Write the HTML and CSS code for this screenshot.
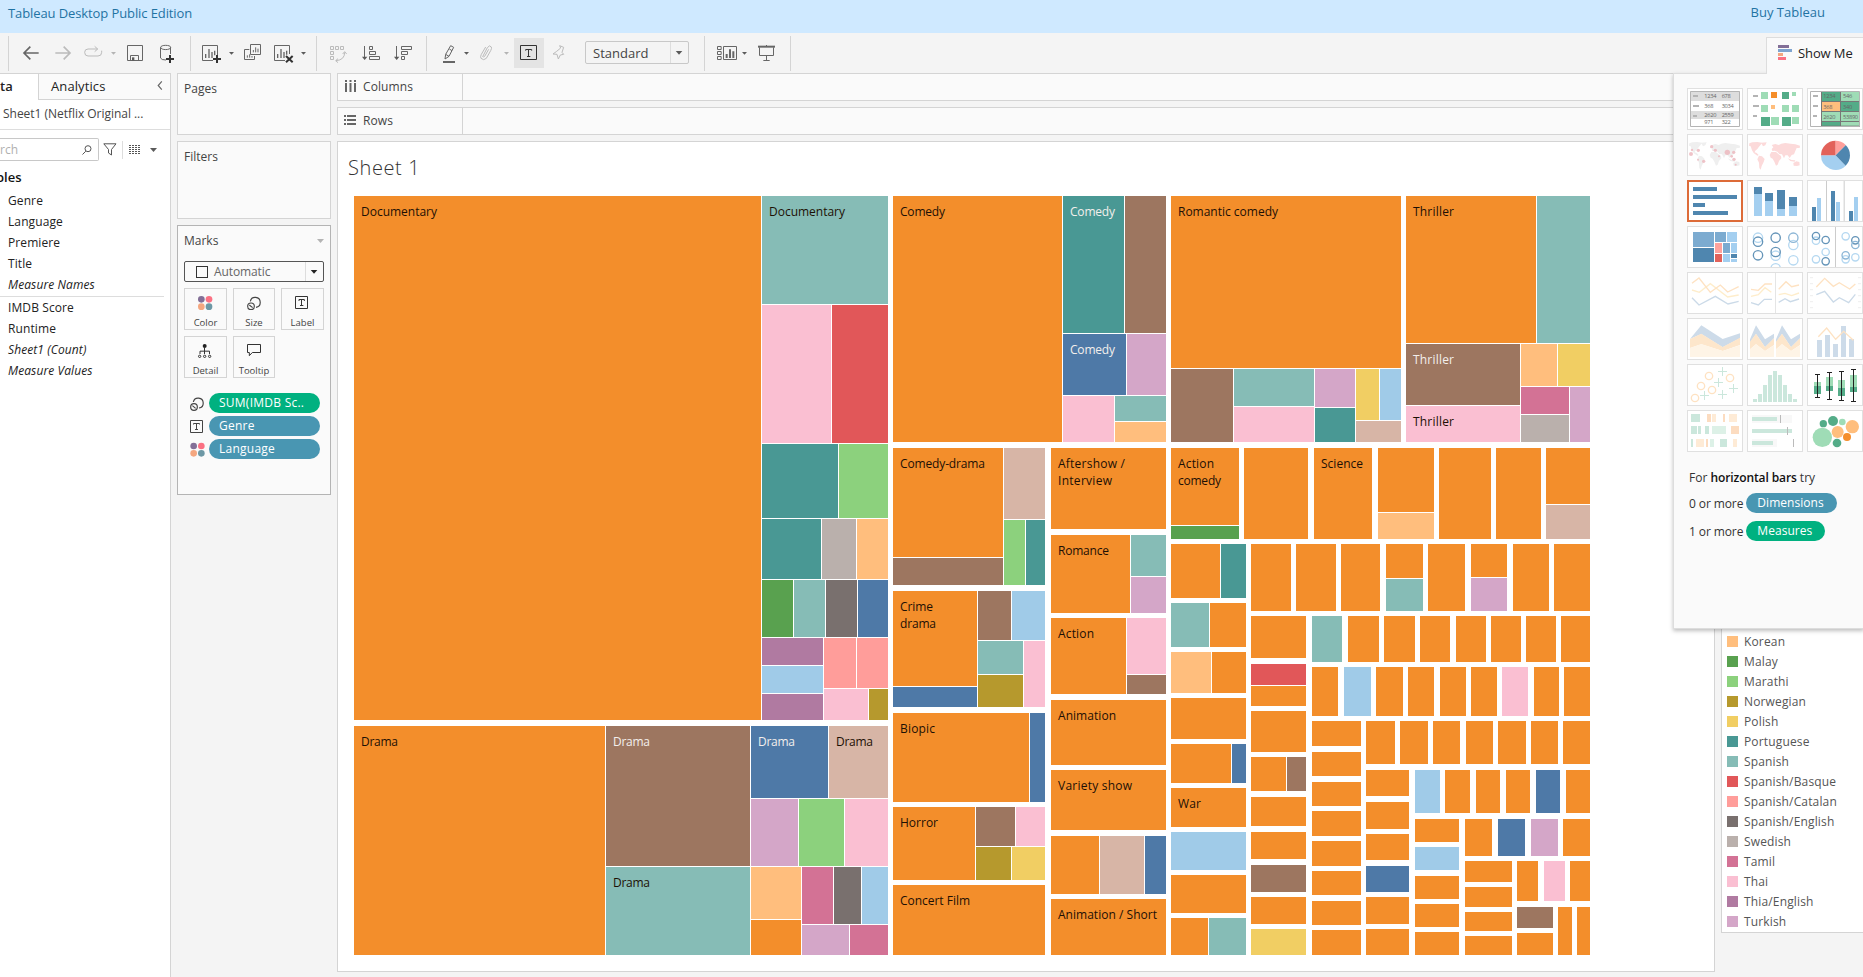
FILE: index.html
```html
<!DOCTYPE html>
<html lang="en">
<head>
<meta charset="utf-8">
<title>Tableau Desktop Public Edition</title>
<link rel="stylesheet" href="styles.css">
</head>
<body>
<header class="banner"><span class="banner-title">Tableau Desktop Public Edition</span><span class="banner-buy">Buy Tableau</span></header>

<div class="toolbar">
  <div class="tool-group tool-first"></div>
  <div class="tool-group">
    <svg width="38" height="40" viewBox="27 99 114 120"><path class="ln5" d="M116 159H72M91 140L72 159L91 178"/></svg>
    <svg width="30" height="40" viewBox="141 99 90 120"><path class="ln5 off" d="M166 159H210M191 140L210 159L191 178"/></svg>
    <svg width="43" height="40" viewBox="231 99 129 120"><path class="ln3 off" d="M293 147H264Q254 147 254 157Q254 168 264 168H294Q305 168 305 157V152M284 139L293 147L284 155"/><path class="offfill" d="M333 156H348L340.500 164Z"/></svg>
    <svg width="30" height="40" viewBox="360 99 90 120"><path class="ln3" d="M382.500 136.500H427.500V181.500H382.500ZM391.500 181V166.500H415.500V181"/><path class="fl" d="M396 172H403V182H396Z"/></svg>
    <svg width="40" height="40" viewBox="450 99 120 120"><path class="ln3" d="M481.500 142V174Q484 180 498 180M511.500 142V162M482 142C482 134 512 134 512 142C512 151 482 151 482 142Z"/><path class="dk5" d="M498 177H522M510 165V189"/></svg>
  </div>
  <div class="tool-group">
    <svg width="47" height="40" viewBox="573 99 141 120"><path class="ln3" d="M639 181.500H607.500V136.500H652.500V166"/><path class="ln4" d="M617 174V162M627 174V147M636 174V156M644 166V152"/><path class="dk5" d="M639 177H663M651 165V189"/><path class="fl" d="M687 156H702L694.500 164Z"/></svg>
    <svg width="30" height="40" viewBox="714 99 90 120"><path class="ln3" d="M751.500 133.500H781.500V163.500H751.500ZM748 148.500H733.500V178.500H763.500V168M742 173V166M749 173V163M756 173V168M760 157V150M767 157V142M774 157V146"/></svg>
    <svg width="48" height="40" viewBox="804 99 144 120"><path class="ln3" d="M855 181.500H823.500V136.500H868.500V162"/><path class="ln4" d="M833 174V162M843 174V147M852 174V156M860 164V152"/><path class="dk5" d="M858 168L878 187M878 168L858 187"/><path class="fl" d="M903 156H918L910.500 164Z"/></svg>
  </div>
  <div class="tool-group">
    <svg width="38" height="40" viewBox="951 99 114 120"><path class="ln3 off" d="M991.500 139.500H1000.500V148.500H991.500ZM1006.500 139.500H1015.500V148.500H1006.500ZM1021.500 139.500H1030.500V148.500H1021.500ZM991.500 154.500H1000.500V163.500H991.500ZM991.500 169.500H1000.500V178.500H991.500ZM1034 157Q1034 180 1008 182M1028 162L1034 155L1040 162M1014 176L1007 182L1014 188"/></svg>
    <svg width="32" height="40" viewBox="1065 99 96 120"><path class="ln3" d="M1093.500 138V172M1108.500 139.500H1117.500V148.500H1108.500ZM1108.500 154.500H1126.500V163.500H1108.500ZM1108.500 169.500H1138.500V178.500H1108.500Z"/><path class="fl" d="M1086 170H1102L1094 180Z"/></svg>
    <svg width="39" height="40" viewBox="1161 99 117 120"><path class="ln3" d="M1189.500 138V172M1204.500 139.500H1234.500V148.500H1204.500ZM1204.500 154.500H1222.500V163.500H1204.500ZM1204.500 169.500H1213.500V178.500H1204.500Z"/><path class="fl" d="M1182 170H1198L1190 180Z"/></svg>
  </div>
  <div class="tool-group">
    <svg width="46" height="40" viewBox="1281 99 138 120"><path class="ln3" d="M1352 137L1361 142L1347 169L1335 177L1337 163ZM1337 163L1347 169M1348 147L1356 152"/><path class="ln6" d="M1329 186H1365"/><path class="fl" d="M1392 156H1407L1399.500 164Z"/></svg>
    <svg width="38" height="40" viewBox="1419 99 114 120"><path class="ln3 off" d="M1449 168L1462 143Q1469 133 1474 141Q1476 145 1472 152L1459 175Q1451 183 1443 175Q1440 170 1444 163L1457 141M1466 148L1454 169Q1450 174 1447 168"/><path class="offfill" d="M1512 156H1527L1519.500 164Z"/></svg>
    <svg class="tool-active" width="30" height="30" viewBox="1542 114 90 90"><path class="dk3" d="M1561.500 136.500H1609.500V178.500H1561.500ZM1577 152V148.500H1595V152M1585.500 148V170M1581 169.500H1591"/></svg>
    <svg width="40" height="40" viewBox="1632 99 120 120"><path class="ln3 off" d="M1679 137L1691 142L1686 157L1691 163L1681 165L1675 177L1671 163L1659 162L1670 154L1682 144Z"/></svg>
    <div class="fit-select"><span class="fit-label">Standard</span><svg class="fit-caret" width="18" height="21" viewBox="0 0 18 21"><path class="fl" d="M5 9H12L8.500 13Z"/></svg></div>
  </div>
  <div class="tool-group">
    <svg width="44" height="40" viewBox="2115 99 132 120"><path class="ln3" d="M2152.500 139.500H2163.500V148.500H2152.500ZM2152.500 154.500H2163.500V163.500H2152.500ZM2152.500 169.500H2163.500V178.500H2152.500ZM2170.500 139.500H2209.500V178.500H2170.500Z"/><path class="ln6" d="M2180 174V162M2190 174V148M2200 174V154"/><path class="fl" d="M2226 156H2241L2233.500 164Z"/></svg>
    <svg width="41" height="40" viewBox="2247 99 123 120"><path class="ln3" d="M2278.500 142V166.500H2320.500V142M2299.500 135V139M2299.500 166V180M2290 181.500H2309"/><path class="ln6" d="M2274 140H2325"/></svg>
  </div>
</div>

<main class="work">
  <aside class="data-pane">
    <div class="tabs"><span class="tab-data">ta</span><span class="tab-analytics">Analytics</span><svg width="6" height="10" viewBox="0 0 6 10"><path class="chev" d="M5 .5L1 5L5 9.500"/></svg></div>
    <div class="source">Sheet1 (Netflix Original ...</div>
    <div class="search-row">
      <div class="search"><span>rch</span><svg width="10" height="10" viewBox="0 0 10 10"><path class="hair" d="M3.800 6.200L.5 9.500M9 3.700A3 3 0 1 1 3 3.700A3 3 0 1 1 9 3.700"/></svg></div>
      <svg class="funnel" width="14" height="13" viewBox="0 0 14 13"><path class="hair" d="M.8 .8H13L8.500 6.500V12L5.500 10V6.500Z"/></svg>
      <i class="rule"></i>
      <svg class="list-icon" width="12" height="10" viewBox="0 0 12 10"><path class="dots" d="M0 .5H12M0 2.500H12M0 4.500H12M0 6.500H12M0 8.500H12"/></svg>
      <svg class="list-caret" width="7" height="4" viewBox="0 0 7 4"><path class="fl" d="M0 0H7L3.500 4Z"/></svg>
    </div>
    <h2 class="tables">bles</h2>
    <ul class="fields">
      <li>Genre</li><li>Language</li><li>Premiere</li><li>Title</li><li><i>Measure Names</i></li>
    </ul>
    <ul class="fields measures">
      <li>IMDB Score</li><li>Runtime</li><li><i>Sheet1 (Count)</i></li><li><i>Measure Values</i></li>
    </ul>
  </aside>

  <aside class="cards">
    <section class="card pages">Pages</section>
    <section class="card filters">Filters</section>
    <section class="card marks">
      <div class="marks-head"><span>Marks</span><svg width="7" height="4" viewBox="0 0 7 4"><path class="offfill" d="M0 0H7L3.500 4Z"/></svg></div>
      <div class="mark-type"><i class="box"></i><span>Automatic</span><svg width="18" height="19" viewBox="0 0 18 19"><path class="dkfill" d="M5 8H12L8.500 12Z"/></svg></div>
      <div class="mark-grid">
        <div class="mark-btn"><svg width="43" height="22" viewBox="552 204 129 66"><use href="#g-color"/></svg>Color</div>
        <div class="mark-btn"><svg width="42" height="22" viewBox="699 204 126 66"><use href="#g-size"/></svg>Size</div>
        <div class="mark-btn"><svg width="43" height="22" viewBox="843 204 129 66"><path class="dk3" d="M886.500 229.500H922.500V265.500H886.500ZM897 243V238.500H913V243M904.500 239V257M900 256.500H910"/></svg>Label</div>
        <div class="mark-btn"><svg width="43" height="22" viewBox="552 348 129 66"><circle class="dkfill" cx="614" cy="378" r="6"/><path class="dk3" d="M613.500 380V402M600 402V393.500H628.500V402"/><g class="dk3"><circle cx="599" cy="409" r="3.500"/><circle cx="614" cy="409" r="3.500"/><circle cx="629" cy="409" r="3.500"/></g></svg>Detail</div>
        <div class="mark-btn"><svg width="42" height="22" viewBox="699 348 126 66"><path class="dk3" d="M742.500 373.500H781.500V397.500H757L748 407V397.500H742.500Z"/></svg>Tooltip</div>
      </div>
      <div class="pills">
        <div class="pill-row"><svg width="15" height="15" viewBox="741 226 45 45"><g id="g-size" class="sizeg"><path d="M751 244A15 15 0 1 1 768 262"/><circle cx="753" cy="259" r="10"/><path d="M748 255L758 263"/></g></svg><span class="pill green">SUM(IMDB Sc..</span></div>
        <div class="pill-row"><svg width="15" height="15" viewBox="0 0 15 15"><path class="hairdk" d="M.5 1.500H12.500V13.500H.5ZM3.500 5.500V4.500H9.500V5.500M6.500 4.500V10.500M5 10.500H8"/></svg><span class="pill blue">Genre</span></div>
        <div class="pill-row"><svg width="15" height="15" viewBox="593 226 45 45"><g id="g-color"><circle cx="604" cy="238" r="10" fill="#836f97"/><circle cx="627" cy="238" r="10" fill="#fb7183"/><circle cx="604" cy="260" r="10" fill="#f4a780"/><circle cx="627" cy="260" r="10" fill="#6d98a5"/></g></svg><span class="pill blue">Language</span></div>
      </div>
    </section>
  </aside>

  <section class="canvas">
    <div class="shelf"><div class="shelf-name"><svg width="11" height="12" viewBox="0 0 11 12"><path class="shelf-ico" d="M1 0V2M5.500 0V2M10 0V2M1 3V12M5.500 3V12M10 3V12"/></svg>Columns</div></div>
    <div class="shelf"><div class="shelf-name rows"><svg width="12" height="10" viewBox="0 0 12 10"><path class="shelf-ico" d="M0 1H2M0 5H2M0 9H2M3 1H12M3 5H12M3 9H12"/></svg>Rows</div></div>
    <div class="lower">
      <section class="sheet">
        <h1>Sheet 1</h1>
        <svg id="treemap" class="treemap" width="1236" height="759" viewBox="354 196 1236 759"></svg>
      </section>
      <aside class="legend">
        <ul>
          <li><i class="c-o"></i>Korean</li><li><i class="c-G"></i>Malay</li><li><i class="c-g"></i>Marathi</li><li><i class="c-N"></i>Norwegian</li><li><i class="c-P"></i>Polish</li><li><i class="c-T"></i>Portuguese</li><li><i class="c-t"></i>Spanish</li><li><i class="c-R"></i>Spanish/Basque</li><li><i class="c-r"></i>Spanish/Catalan</li><li><i class="c-K"></i>Spanish/English</li><li><i class="c-k"></i>Swedish</li><li><i class="c-M"></i>Tamil</li><li><i class="c-m"></i>Thai</li><li><i class="c-V"></i>Thia/English</li><li><i class="c-v"></i>Turkish</li>
        </ul>
      </aside>
    </div>
  </section>
</main>

<div class="showme-tab"><svg width="14" height="15" viewBox="0 0 14 15"><path fill="#836f97" d="M0 0H11V3H0Z"/><path fill="#7fa4cf" d="M0 4H14V7H0Z"/><path fill="#f4a780" d="M0 8H5V11H0Z"/><path fill="#fb7183" d="M0 12H8V15H0Z"/></svg>Show Me</div>
<aside class="showme">
  <div class="thumbs">
    <svg viewBox="81 264 168 126"><path fill="#ddd" d="M91 273H240V303H91ZM91 333H240V357H91Z"/><path fill="none" stroke="#b4b4b4" stroke-width="3" d="M91.500 274.500H238.500V379.500H91.500Z"/><path class="dash" d="M99 288H114M99 318H117M99 348H111"/><g class="tiny"><text x="133" y="295">1234</text><text x="185" y="295">678</text><text x="133" y="323">368</text><text x="185" y="323">3034</text><text x="133" y="350">2620</text><text x="185" y="350">2559</text><text x="133" y="373">971</text><text x="185" y="373">322</text></g></svg>
    <svg viewBox="261 264 168 126"><path class="dash" d="M279 288H294M279 318H297M279 348H291"/><path fill="#9fdcb6" d="M303 276H324V297H303ZM396 276H408V288H396ZM303 315H324V336H303ZM366 315H387V336H366ZM396 315H417V336H396ZM333 351H357V375H333ZM396 351H417V372H396Z"/><path fill="#54ac88" d="M366 276H387V297H366ZM303 351H330V378H303ZM366 351H393V378H366Z"/><path fill="#f58e2b" d="M333 276H351V294H333Z"/><path fill="#ffbe7d" d="M333 315H345V327H333Z"/></svg>
    <svg viewBox="441 264 168 126"><path fill="#54ac88" d="M485 276H541V305H485ZM543 306H600V334H543ZM485 366H541V380H485Z"/><path fill="#9fdcb6" d="M543 276H600V304H543ZM485 336H541V364H485ZM543 336H600V364H543ZM543 366H600V380H543Z"/><path fill="#ffbe7d" d="M485 306H541V334H485Z"/><path stroke="#777" stroke-width="3" fill="none" d="M484.500 275V379M541.500 275V379M484 304.500H600M484 334.500H600M484 364.500H600M484 378.500H600"/><path fill="none" stroke="#b4b4b4" stroke-width="3" d="M451.500 274.500H598.500V379.500H451.500Z"/><path class="dash" d="M459 288H474M459 318H474M459 348H471"/><g class="tiny"><text x="490" y="295">1234</text><text x="549" y="295">546</text><text x="490" y="326">368</text><text x="549" y="326">340</text><text x="490" y="356">2620</text><text x="549" y="356">53890</text></g></svg>

    <svg class="gray-map" viewBox="81 402 168 126"><path id="world" d="M88 430L97 427L112 426L126 428L122 434L117 440L112 447L106 452L104 457L110 459L116 465L112 467L101 459L96 451L92 439L87 437ZM123 428L140 427L136 436L129 439ZM117 467L126 469L134 477L131 486L125 498L122 509L118 504L117 488L112 478ZM155 435L166 432L176 435L184 431L196 429L212 431L226 433L240 437L239 444L230 444L226 453L222 463L215 465L209 474L203 466L196 466L192 475L186 463L178 462L172 455L164 452L157 453L155 447L160 442ZM154 456L168 456L176 463L183 468L184 475L177 483L173 494L168 497L163 485L158 476L152 473L149 465ZM220 489L229 484L238 486L239 496L231 498L221 497ZM203 475L215 480L226 481L224 485L211 483Z"/><g fill="#ecb8be" fill-opacity=".85"><circle cx="93" cy="462" r="6"/><circle cx="96" cy="450" r="3.500"/><circle cx="115" cy="451" r="5"/><circle cx="114" cy="479" r="3"/><circle cx="131" cy="484" r="5"/><circle cx="155" cy="440" r="5"/><circle cx="166" cy="451" r="5"/><circle cx="177" cy="469" r="3"/><circle cx="202" cy="457" r="8"/><circle cx="215" cy="469" r="4"/><circle cx="221" cy="457" r="5"/><circle cx="222" cy="478" r="5"/><circle cx="227" cy="494" r="3"/></g></svg>
    <svg class="pink-map" viewBox="261 402 168 126"><use href="#world" x="180"/></svg>
    <svg viewBox="441 402 168 126"><path fill="#a4cff0" d="M526.500 466H483A43.500 43.500 0 0 0 557 497Z"/><path fill="#4f86af" d="M526.500 466L557 497A43.500 43.500 0 0 0 557 435Z"/><path fill="#ff9f9b" d="M526.500 466L557 435A43.500 43.500 0 0 0 526.500 422.500Z"/><path fill="#e2625a" d="M526.500 466V422.500A43.500 43.500 0 0 0 483 466Z"/></svg>

    <svg class="selected" viewBox="81 540 168 126"><path fill="#4f86af" d="M99 561H171V573H99ZM99 585H231V597H99ZM99 609H135V621H99ZM99 633H204V645H99Z"/></svg>
    <svg viewBox="261 540 168 126"><path fill="#a4cff0" d="M282 582H306V648H282ZM315 603H339V648H315ZM351 627H375V648H351ZM387 618H411V648H387Z"/><path fill="#4f86af" d="M282 561H306V582H282ZM315 579H339V603H315ZM351 570H375V627H351ZM387 591H411V618H387Z"/></svg>
    <svg viewBox="441 540 168 126"><path stroke="#ccc" stroke-width="3" d="M499.500 543V663M552.500 543V663"/><path fill="#4f86af" d="M456 621H468V663H456ZM513 573H525V663H513ZM567 633H579V663H567Z"/><path fill="#a4cff0" d="M471 594H483V663H471ZM528 606H540V663H528ZM582 591H594V663H582Z"/></svg>

    <svg viewBox="81 678 168 126"><path fill="#4f86af" d="M99 744H162V786H99ZM213 762H231V774H213Z"/><path fill="#7cabd0" d="M99 696H162V741H99ZM165 696H198V726H165ZM189 729H210V759H189Z"/><path fill="#a4cff0" d="M201 696H231V726H201ZM213 729H231V759H213ZM189 762H210V786H189ZM213 777H231V786H213Z"/><path fill="#ffa29c" d="M165 729H186V759H165Z"/><path fill="#e2625a" d="M165 762H186V786H165Z"/></svg>
    <svg viewBox="261 678 168 126"><g class="ring lite"><circle cx="294" cy="713" r="14"/><circle cx="347" cy="767" r="14"/><circle cx="347" cy="805" r="14"/><circle cx="400" cy="735" r="14"/><circle cx="400" cy="781" r="14"/></g><g class="ring deep"><circle cx="294" cy="725" r="14"/><circle cx="294" cy="766" r="14"/><circle cx="347" cy="713" r="14"/><circle cx="347" cy="756" r="14"/></g><g class="ring mid"><circle cx="400" cy="713" r="14"/></g></svg>
    <svg viewBox="441 678 168 126"><path stroke="#ccc" stroke-width="3" d="M526.500 681V801"/><g class="ring lite"><circle cx="468" cy="722" r="11"/><circle cx="497" cy="756" r="11"/><circle cx="468" cy="778" r="11"/><circle cx="557" cy="709" r="11"/><circle cx="557" cy="778" r="11"/><circle cx="586" cy="772" r="11"/></g><g class="ring deep"><circle cx="468" cy="708" r="11"/><circle cx="497" cy="720" r="11"/><circle cx="497" cy="784" r="11"/><circle cx="586" cy="721" r="11"/></g><g class="ring mid"><circle cx="586" cy="735" r="11"/><circle cx="557" cy="766" r="11"/></g></svg>

    <svg viewBox="81 6 168 126"><g class="tl"><path stroke="#feedcb" d="M96 60L118 67L151 41L203 81L236 75"/><path stroke="#fee2c2" d="M96 40L117 24L151 67L181 45L203 66L236 50"/><path stroke="#cbdae8" d="M96 83L117 105L166 79L204 102L236 94"/></g></svg>
    <svg viewBox="261 6 168 126"><path stroke="#e5e5e5" stroke-width="3" d="M346.500 9V129"/><g class="tl"><path stroke="#feedcb" d="M273 79L295 74L315 53L334 67M356 74L375 70L395 77L417 69"/><path stroke="#fee2c2" d="M273 58L295 61L315 42H336M356 58L378 35L395 50L417 45"/><path stroke="#cbdae8" d="M273 98L295 105L313 88H336M356 97L375 86L391 95L417 87"/></g></svg>
    <svg viewBox="441 6 168 126"><path stroke="#e5e5e5" stroke-width="2" d="M450 23H459M450 41H459M450 59H459M450 77H459M450 95H459M450 113H459M594 23H603M594 41H603M594 59H603M594 77H603M594 95H603M594 113H603"/><g class="tl"><path stroke="#fee2c2" d="M469 51L494 25L520 49L538 38L569 57L586 42"/><path stroke="#cbdae8" d="M469 74L494 64L520 96L538 83L566 98L586 73"/></g></svg>

    <svg viewBox="81 144 168 126"><path fill="#cddbe9" d="M90 207L124 166L188 207L240 190V205L188 232L124 192L90 207Z"/><path fill="#fde6cb" d="M90 207L124 191L188 231L240 203V225L188 243L124 223L90 234Z"/><path fill="#fef4e6" d="M90 234L124 222L188 243L240 226V261H90Z"/></svg>
    <svg viewBox="261 144 168 126"><g id="areas"><path fill="#cddbe9" d="M270 208L288 166L315 208L342 191V205L315 232L288 192L270 218Z"/><path fill="#fde6cb" d="M270 215L288 191L315 231L342 205V225L315 243L288 223L270 238Z"/><path fill="#fef4e6" d="M270 238L288 222L315 243L342 226V261H270Z"/></g><use href="#areas" x="78"/></svg>
    <svg viewBox="441 144 168 126"><path fill="#cddbe9" d="M471 210H486V261H471ZM495 195H510V261H495ZM519 222H534V261H519ZM543 168H558V261H543ZM567 207H582V261H567Z"/><path fill="none" stroke="#fee2c2" stroke-width="4" d="M475 200L500 174L527 208L551 184L580 211"/></svg>

    <svg viewBox="81 282 168 126"><g class="ring peach"><circle cx="147" cy="318" r="11"/><circle cx="210" cy="324" r="11"/><circle cx="123" cy="348" r="11"/><circle cx="156" cy="360" r="11"/><circle cx="105" cy="384" r="11"/></g><path fill="none" stroke="#cbe7dc" stroke-width="3" d="M174 304.500H201M187.500 291V318M162 337.500H189M175.500 324V351M207 355.500H234M220.500 342V369M174 373.500H201M187.500 360V387M120 376.500H147M133.500 363V390"/></svg>
    <svg viewBox="261 282 168 126"><path fill="#cbe7dc" d="M279 387H291V396H279ZM294 372H306V396H294ZM309 345H321V396H309ZM324 315H336V396H324ZM339 303H351V396H339ZM354 315H366V396H354ZM369 345H381V396H369ZM384 372H396V396H384ZM399 387H411V396H399Z"/></svg>
    <svg viewBox="441 282 168 126"><path fill="#9fdcb6" d="M462 336H483V348H462ZM498 321H519V348H498ZM534 330H555V354H534ZM570 315H591V351H570Z"/><path fill="#54ac88" d="M462 348H483V372H462ZM498 348H519V363H498ZM534 354H555V378H534ZM570 351H591V366H570Z"/><path fill="none" stroke="#222" stroke-width="3" d="M465 313.500H480M472.500 313V382M465 382.500H480M501 307.500H516M508.500 307V388M501 388.500H516M537 304.500H552M544.500 304V391M537 391.500H552M573 298.500H588M580.500 298V394M573 394.500H588"/></svg>

    <svg viewBox="81 420 168 126"><path fill="#cbe7dc" d="M93 432H120V456H93ZM93 468H111V492H93ZM114 468H123V492H114ZM135 468H147V492H135ZM93 507H99V531H93ZM180 507H201V531H180Z"/><path fill="#ddf1e7" d="M156 468H198V492H156ZM150 507H162V531H150Z"/><path fill="#fcdcc0" d="M141 432H153V456H141ZM189 432H195V456H189ZM213 468H237V492H213ZM138 507H144V531H138Z"/><path fill="#feebd6" d="M156 432H168V456H156ZM207 432H231V456H207ZM108 507H132V531H108ZM219 507H231V531H219Z"/></svg>
    <svg viewBox="261 420 168 126"><path fill="#f8f8f8" d="M276 435H396V459H276ZM276 477H396V489H276ZM276 507H351V531H276Z"/><path fill="#cbe7dc" d="M276 441H351V453H276ZM276 477H396V489H276ZM276 513H339V525H276Z"/><path stroke="#bbb" stroke-width="3" d="M361.500 435V459M382.500 471V495M400.500 507V531"/></svg>
    <svg viewBox="441 420 168 126"><g fill="#54ac88"><circle cx="490" cy="461" r="11"/><circle cx="519" cy="453" r="15"/><circle cx="531" cy="519" r="13"/></g><g fill="#9fdcb6"><circle cx="487" cy="502" r="29"/><circle cx="547" cy="456" r="10"/></g><g fill="#ffbe7d"><circle cx="577" cy="470" r="20"/><circle cx="533" cy="486" r="18"/></g><circle fill="#f58e2b" cx="561" cy="501" r="12"/></svg>
  </div>
  <div class="hint">For <b>horizontal bars</b> try</div>
  <div class="need"><span>0 or more</span><span class="tag blue">Dimensions</span></div>
  <div class="need"><span>1 or more</span><span class="tag green">Measures</span></div>
</aside>
<script src="treemap.js"></script>
</body>
</html>
```
FILE: styles.css
```css
* { box-sizing: border-box; }
body { margin: 0; width: 1863px; height: 977px; overflow: hidden; position: relative; display: flex; flex-direction: column; background: #f4f4f4; color: #444; font-family: "Open Sans", "Noto Sans", sans-serif; font-size: 12px; }
h1, h2, ul { margin: 0; padding: 0; font-weight: normal; }
ul { list-style: none; }
svg { display: block; flex: none; }
.banner { height: 33px; flex: none; background: #cfe9ff; display: flex; justify-content: space-between; padding: 0 38px 0 8px; color: #1f73a3; font-size: 13px; line-height: 26px; }
.banner-title { letter-spacing: -.1px; }
.banner-buy { line-height: 24px; }
.toolbar { height: 40px; flex: none; display: flex; }
.tool-group { display: flex; align-items: center; height: 40px; border-right: 1px solid transparent; background: linear-gradient(#d4d4d4, #d4d4d4) right 0 top 3px / 1px 35px no-repeat border-box; }
.tool-first { width: 9px; }
.ln3, .ln4, .ln5, .ln6, .dk3, .dk5 { fill: none; stroke: #666; stroke-width: 3; }
.ln4 { stroke-width: 4; }
.ln5 { stroke-width: 5; }
.ln6 { stroke-width: 6; }
.dk3 { stroke: #333; }
.dk5 { stroke: #333; stroke-width: 6; }
.fl { fill: #5a5a5a; }
.dkfill { fill: #222; }
.off { stroke: #bbb; }
.offfill { fill: #b4b4b4; }
.tool-active { background: #e4e4e4; margin-left: 3px; }
.fit-select { width: 104px; height: 23px; margin: 0 15px 1px 1px; border: 1px solid #c8c8c8; border-radius: 2px; display: flex; align-items: center; justify-content: space-between; }
.fit-label { padding-left: 7px; font-size: 13px; line-height: 20px; }
.fit-caret { border-left: 1px solid #ddd; }
.work { flex: 1; min-height: 0; display: flex; gap: 6px; }
.data-pane { width: 171px; background: #fff; border: 1px solid #d4d4d4; border-left: 0; border-bottom: 0; overflow: hidden; }
.tabs { display: flex; height: 26px; align-items: center; background: #fafafa; font-size: 13px; color: #222; }
.tab-data { width: 39px; height: 26px; background: #fff; border-right: 1px solid #d4d4d4; font-weight: 600; line-height: 25px; }
.tab-analytics { flex: 1; height: 26px; padding-left: 12px; line-height: 25px; border-bottom: 1px solid #d4d4d4; letter-spacing: .1px; }
.tabs svg { width: 13px; height: 26px; padding: 7px 7px 9px 0; border-bottom: 1px solid #d4d4d4; }
.chev { fill: none; stroke: #666; stroke-width: 1.300; }
.source { height: 30px; padding-left: 3px; line-height: 28px; border-bottom: 1px solid #ddd; white-space: nowrap; letter-spacing: -.03px; }
.search-row { height: 39px; display: flex; align-items: center; }
.search { width: 99px; height: 23px; border: 1px solid #c8c8c8; border-left: 0; border-radius: 0 2px 2px 0; display: flex; align-items: center; justify-content: space-between; padding-right: 6px; color: #b0b0b0; }
.hair, .hairdk { fill: none; stroke: #555; stroke-width: 1; }
.hairdk { stroke: #444; }
.funnel { margin-left: 4px; }
.rule { width: 1px; height: 18px; background: #ddd; margin-left: 5px; }
.list-icon { margin-left: 6px; }
.dots { stroke: #555; stroke-width: 1; stroke-dasharray: 2 1; }
.list-caret { margin-left: 9px; }
.tables { font-size: 13px; font-weight: 600; line-height: 17px; color: #111; margin-left: -4px; height: 21px; }
.fields { margin-right: 6px; color: #222; border-bottom: 1px solid #ddd; height: 107px; }
.fields li { height: 21px; line-height: 21px; padding-left: 8px; letter-spacing: .1px; }
.fields.measures { border: 0; }
.cards { width: 154px; display: flex; flex-direction: column; gap: 6px; }
.card { background: #fafafa; border: 1px solid #d4d4d4; padding: 6px; line-height: 18px; }
.pages { height: 62px; }
.filters { height: 78px; }
.marks { height: 270px; border-color: #b4b4b4; }
.marks-head { display: flex; justify-content: space-between; align-items: center; height: 18px; }
.mark-type { margin-top: 11px; width: 140px; height: 21px; border: 1px solid #555; border-radius: 2px; display: flex; align-items: center; }
.mark-type span { flex: 1; padding-left: 6px; color: #666; letter-spacing: -.1px; }
.mark-type svg { border-left: 1px solid #ddd; }
.box { width: 12px; height: 12px; border: 1px solid #333; margin-left: 11px; }
.mark-grid { display: grid; grid-template-columns: 43px 42px 43px; gap: 6px; margin-top: 6px; }
.mark-btn { height: 42px; border: 1px solid #d4d4d4; font-size: 9.500px; line-height: 21px; text-align: center; color: #444; }
.mark-btn svg { margin: -1px -1px 2px; }
.sizeg { fill: none; stroke: #444; stroke-width: 3.500; }
.pills { margin-top: 15px; display: flex; flex-direction: column; gap: 3px; padding-left: 6px; }
.pill-row { display: flex; gap: 4px; align-items: center; }
.pill { width: 111px; height: 20px; border-radius: 10px; color: #fff; padding-left: 10px; line-height: 19px; letter-spacing: .25px; }
.green { background: #00b180; }
.blue { background: #4996b2; }
.canvas { flex: 1; display: flex; flex-direction: column; gap: 6px; }
.shelf { height: 28px; flex: none; border: 1px solid #d4d4d4; background: #fafafa; }
.shelf-name { width: 125px; height: 26px; border-right: 1px solid #d4d4d4; display: flex; align-items: center; gap: 7px; padding: 0 0 2px 7px; letter-spacing: .1px; }
.shelf-name.rows { padding-left: 6px; }
.shelf-ico { stroke: #666; stroke-width: 2; }
.lower { flex: 1; min-height: 0; display: flex; gap: 6px; }
.sheet { width: 1378px; height: 831px; background: #fff; border: 1px solid #d4d4d4; padding-left: 10px; }
.sheet h1 { height: 54px; line-height: 51px; font-size: 20px; font-weight: 300; color: #333; letter-spacing: .6px; }
.treemap { margin-left: 6px; font-size: 12px; fill: #1d1005; shape-rendering: crispEdges; }
.treemap .light { fill: #f3efec; }
.legend { flex: 1; height: 792px; background: #fff; border: 1px solid #d4d4d4; border-right: 0; display: flex; flex-direction: column; justify-content: flex-end; padding: 0 0 1px 5px; }
.legend li { height: 20px; display: flex; align-items: center; gap: 6px; color: #555; letter-spacing: .15px; }
.legend i { width: 11px; height: 11px; }
.c-B { fill: #4e79a7; background: #4e79a7; }
.c-b { fill: #a0cbe8; background: #a0cbe8; }
.c-O { fill: #f38e2b; background: #f38e2b; }
.c-o { fill: #ffbe7d; background: #ffbe7d; }
.c-G { fill: #59a14f; background: #59a14f; }
.c-g { fill: #8cd17d; background: #8cd17d; }
.c-N { fill: #b6992d; background: #b6992d; }
.c-P { fill: #f1ce63; background: #f1ce63; }
.c-T { fill: #499894; background: #499894; }
.c-t { fill: #86bcb6; background: #86bcb6; }
.c-R { fill: #e15759; background: #e15759; }
.c-r { fill: #ff9d9a; background: #ff9d9a; }
.c-K { fill: #79706e; background: #79706e; }
.c-k { fill: #bab0ac; background: #bab0ac; }
.c-M { fill: #d37295; background: #d37295; }
.c-m { fill: #fabfd2; background: #fabfd2; }
.c-V { fill: #b07aa1; background: #b07aa1; }
.c-v { fill: #d4a6c8; background: #d4a6c8; }
.c-W { fill: #9d7660; background: #9d7660; }
.c-w { fill: #d7b5a6; background: #d7b5a6; }
.showme { position: absolute; left: 1673px; top: 73px; width: 191px; height: 556px; background: #fafafa; border: 1px solid #ddd; box-shadow: 0 2px 4px rgba(0, 0, 0, .25); padding: 14px 0 0 13px; font-size: 12px; color: #333; }
.showme-tab { position: absolute; z-index: 1; left: 1766px; top: 37px; width: 98px; height: 37px; background: #fafafa; border: 1px solid #ddd; border-bottom: 0; padding: 0 0 7px 11px; display: flex; align-items: center; gap: 6px; font-size: 13px; color: #222; letter-spacing: -.1px; }
.thumbs { display: grid; grid-template-columns: repeat(3, 56px); gap: 4px; }
.thumbs > svg { width: 56px; height: 42px; background: #fff; outline: 1px solid #e0e0e0; outline-offset: -1px; }
.thumbs > .selected { outline: 2px solid #dd6b38; outline-offset: -2px; }
.dash { stroke: #b4b4b4; stroke-width: 6; }
.tiny { font-size: 17px; fill: #666; letter-spacing: -.8px; }
.gray-map { fill: #efefef; }
.pink-map { fill: #fcdada; }
.ring { fill: none; stroke-width: 4; }
.lite { stroke: #b5d8f1; }
.deep { stroke: #6494b8; }
.mid { stroke: #8cb6d6; }
.peach { stroke: #fee2c2; }
.tl { fill: none; stroke-width: 4; }
.hint { margin-top: 17px; line-height: 18px; padding-left: 2px; }
.hint b { font-weight: 600; color: #111; letter-spacing: -.1px; }
.need { display: flex; align-items: center; height: 20px; margin-top: 6px; padding-left: 2px; gap: 3px; letter-spacing: -.1px; }
.need + .need { margin-top: 8px; }
.tag { height: 20px; border-radius: 10px; padding: 0 13px 0 11px; line-height: 19px; letter-spacing: .05px; color: #fff; }
```
FILE: treemap.js
```js
// Tiles grouped by colour key; every tile is left, top, right, bottom.
const tiles = {
  O: [
    [354,196,761,720],[354,726,605,955],[751,920,801,955],
    [893,196,1062,442],[893,448,1003,557],[893,591,977,686],[893,713,1029,802],[893,807,975,880],[893,885,1045,955],
    [1051,448,1166,529],[1051,535,1130,613],[1051,618,1126,694],[1051,700,1166,765],[1051,770,1166,830],[1051,836,1099,894],[1051,899,1166,955],
    [1171,196,1401,368],[1406,196,1536,343],
    [1171,448,1239,525],[1244,448,1308,539],[1314,448,1372,539],[1378,448,1434,512],[1439,448,1491,539],[1496,448,1541,539],[1546,448,1590,504],
    [1171,544,1220,598],[1210,603,1246,647],[1212,652,1246,693],[1171,698,1246,739],[1171,744,1231,783],[1171,788,1246,827],[1171,875,1246,913],[1171,918,1208,955],
    [1251,544,1291,611],[1296,544,1336,611],[1341,544,1380,611],[1386,544,1423,578],[1428,544,1465,611],[1471,544,1507,577],[1513,544,1549,611],[1554,544,1590,611],
    [1251,616,1306,658],[1251,686,1306,706],[1251,711,1306,752],[1251,757,1286,791],[1251,797,1306,826],[1251,832,1306,859],[1251,897,1306,924],
    [1348,616,1379,662],[1384,616,1415,662],[1420,616,1450,662],[1456,616,1486,662],[1491,616,1521,662],[1526,616,1556,662],[1561,616,1590,662],
    [1312,667,1338,716],[1376,667,1403,716],[1408,667,1434,716],[1440,667,1466,716],[1471,667,1497,716],[1534,667,1559,716],[1564,667,1590,716],
    [1312,721,1361,746],[1312,752,1361,776],[1312,782,1361,806],[1312,811,1361,836],[1312,841,1361,866],[1312,871,1361,895],[1312,901,1361,925],[1312,930,1361,955],
    [1366,721,1395,764],[1400,721,1428,764],[1433,721,1460,764],[1466,721,1493,764],[1498,721,1526,764],[1531,721,1558,764],[1563,721,1590,764],
    [1366,770,1409,796],[1366,802,1409,829],[1366,834,1409,860],[1366,897,1409,924],[1366,929,1409,955],
    [1445,770,1470,813],[1476,770,1500,813],[1506,770,1530,813],[1566,770,1590,813],
    [1415,819,1459,842],[1415,876,1459,899],[1415,904,1459,927],[1415,932,1459,955],
    [1465,819,1492,856],[1563,819,1590,856],
    [1465,861,1512,882],[1465,887,1512,907],[1465,912,1512,931],[1465,936,1512,955],
    [1517,861,1538,901],[1570,861,1590,901],[1517,933,1553,955],[1558,907,1572,955],[1577,907,1590,955]
  ],
  o: [[857,519,888,579],[751,867,801,919],[1115,422,1166,442],[1521,344,1557,386],[1378,513,1434,539],[1171,652,1211,693]],
  t: [[762,196,888,304],[794,580,825,637],[606,867,750,955],[1115,396,1166,421],[978,641,1023,674],[1131,535,1166,576],[1234,369,1314,406],[1537,196,1590,343],[1171,603,1209,647],[1209,918,1246,955],[1386,579,1423,611],[1312,616,1342,662]],
  T: [[762,444,838,518],[762,519,821,579],[1063,196,1124,333],[1026,520,1045,585],[1315,408,1355,442],[1221,544,1246,598]],
  m: [[762,305,831,443],[824,689,868,720],[845,799,888,866],[1063,396,1114,442],[1024,641,1045,707],[1016,807,1045,846],[1127,618,1166,674],[1234,407,1314,442],[1406,406,1520,442],[1502,667,1528,716],[1544,861,1565,901]],
  R: [[832,305,888,443],[1251,664,1306,685]],
  r: [[824,638,856,688],[857,638,888,688]],
  g: [[839,444,888,518],[799,799,844,866],[1004,520,1025,585]],
  G: [[762,580,793,637],[1171,526,1239,539]],
  k: [[822,519,856,579],[1521,415,1569,442]],
  K: [[826,580,857,637],[834,867,861,924]],
  B: [[858,580,888,637],[751,726,828,798],[1063,334,1126,395],[893,687,977,707],[1030,713,1045,802],[1145,836,1166,894],[1232,744,1246,783],[1366,866,1409,892],[1536,770,1560,813],[1498,819,1525,856]],
  b: [[762,666,823,693],[862,867,888,924],[1012,591,1045,640],[1380,369,1401,420],[1171,832,1246,870],[1344,667,1371,716],[1415,770,1440,813],[1415,847,1459,870]],
  V: [[762,638,823,665],[762,694,823,720]],
  v: [[751,799,798,866],[802,925,849,955],[1127,334,1166,395],[1131,577,1166,613],[1315,369,1355,407],[1570,387,1590,442],[1471,578,1507,611],[1531,819,1558,856]],
  N: [[869,689,888,720],[978,675,1023,707],[976,847,1011,880]],
  P: [[1012,847,1045,880],[1356,369,1379,420],[1558,344,1590,386],[1251,929,1306,955]],
  M: [[802,867,833,924],[850,925,888,955],[1521,387,1569,414]],
  W: [[606,726,750,866],[1125,196,1166,333],[893,558,1003,585],[978,591,1011,640],[976,807,1015,846],[1127,675,1166,694],[1171,369,1233,442],[1406,344,1520,405],[1287,757,1306,791],[1251,865,1306,892],[1517,907,1553,928]],
  w: [[829,726,888,798],[1004,448,1045,519],[1100,836,1144,894],[1356,421,1401,442],[1546,505,1590,539]]
};

// Tile left, tile top, text, text width, light text flag, line number.
const labels = [
  [354,196,'Documentary',76],[762,196,'Documentary',76],[893,196,'Comedy',45],[1063,196,'Comedy',45,1],[1063,334,'Comedy',45,1],
  [1171,196,'Romantic comedy',100],[1406,196,'Thriller',41],[1406,344,'Thriller',41,1],[1406,406,'Thriller',41],
  [354,726,'Drama',37],[606,726,'Drama',37,1],[751,726,'Drama',37,1],[829,726,'Drama',37],[606,867,'Drama',37],
  [893,448,'Comedy-drama',85],[893,591,'Crime',33],[893,591,'drama',36,0,1],[893,713,'Biopic',35],[893,807,'Horror',38],[893,885,'Concert Film',70],
  [1051,448,'Aftershow /',67],[1051,448,'Interview',54,0,1],[1051,535,'Romance',51],[1051,618,'Action',36],[1051,700,'Animation',58],[1051,770,'Variety show',74],[1051,899,'Animation / Short',99],
  [1171,448,'Action',36],[1171,448,'comedy',43,0,1],[1314,448,'Science',42],[1171,788,'War',23]
];

const chart = document.getElementById('treemap');
const add = (tag, attrs) => {
  const el = document.createElementNS('http://www.w3.org/2000/svg', tag);
  for (const name in attrs) el.setAttribute(name, attrs[name]);
  return chart.appendChild(el);
};
for (const key in tiles) {
  for (const [x, y, right, bottom] of tiles[key]) {
    add('rect', { x, y, width: right - x, height: bottom - y, class: 'c-' + key });
  }
}
for (const [x, y, text, width, light, line] of labels) {
  add('text', { x: x + 7, y: y + 20 + (line ? 17 : 0), textLength: width, class: light ? 'light' : '' }).textContent = text;
}
```
